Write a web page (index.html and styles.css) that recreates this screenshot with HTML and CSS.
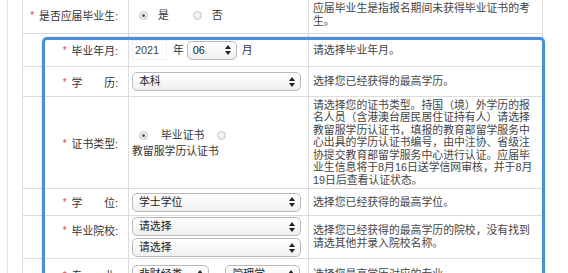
FILE: index.html
```html
<!DOCTYPE html>
<html lang="zh-CN">
<head>
<meta charset="utf-8">
<title>报名信息</title>
<link rel="stylesheet" href="styles.css">
</head>
<body>
<div class="page">
  <div class="frame">
    <table class="form">
      <colgroup>
        <col class="c-label">
        <col class="c-val">
        <col class="c-desc">
      </colgroup>
      <tr class="r1">
        <th><span class="req">*</span>是否应届毕业生:</th>
        <td class="val">
          <span class="radio on first"></span><span class="opt">是</span><span class="radio second"></span><span class="opt">否</span>
        </td>
        <td class="desc">应届毕业生是指报名期间未获得毕业证书的考生。</td>
      </tr>
      <tr class="r2">
        <th><span class="req">*</span>毕业年月:</th>
        <td class="val">
          <div class="ym">
            <span class="year">2021</span><span class="unit u-year">年</span>
            <div class="select s-month"><span>06</span><svg class="arrows" width="6" height="10" viewBox="0 0 6 10"><path d="M0 4 L3 0 L6 4 Z M0 6 L3 10 L6 6 Z"/></svg></div>
            <span class="unit u-month">月</span>
          </div>
        </td>
        <td class="desc">请选择毕业年月。</td>
      </tr>
      <tr class="r3">
        <th><span class="req">*</span>学　　历:</th>
        <td class="val">
          <div class="select"><span>本科</span><svg class="arrows" width="6" height="10" viewBox="0 0 6 10"><path d="M0 4 L3 0 L6 4 Z M0 6 L3 10 L6 6 Z"/></svg></div>
        </td>
        <td class="desc">选择您已经获得的最高学历。</td>
      </tr>
      <tr class="r4">
        <th><span class="req">*</span>证书类型:</th>
        <td class="val cert">
          <span class="radio on first"></span><span class="opt wide">毕业证书</span><span class="radio second-c"></span><span class="opt-block">教留服学历认证书</span>
        </td>
        <td class="desc">请选择您的证书类型。持国（境）外学历的报名人员（含港澳台居民居住证持有人）请选择教留服学历认证书，填报的教育部留学服务中心出具的学历认证书编号，由中注协、省级注协提交教育部留学服务中心进行认证。应届毕业生信息将于8月16日送学信网审核，并于8月19日后查看认证状态。</td>
      </tr>
      <tr class="r5">
        <th><span class="req">*</span>学　　位:</th>
        <td class="val">
          <div class="select"><span>学士学位</span><svg class="arrows" width="6" height="10" viewBox="0 0 6 10"><path d="M0 4 L3 0 L6 4 Z M0 6 L3 10 L6 6 Z"/></svg></div>
        </td>
        <td class="desc">选择您已经获得的最高学位。</td>
      </tr>
      <tr class="r6">
        <th class="top"><span class="req">*</span>毕业院校:</th>
        <td class="val">
          <div class="stack">
            <div class="select"><span>请选择</span><svg class="arrows" width="6" height="10" viewBox="0 0 6 10"><path d="M0 4 L3 0 L6 4 Z M0 6 L3 10 L6 6 Z"/></svg></div>
            <div class="select"><span>请选择</span><svg class="arrows" width="6" height="10" viewBox="0 0 6 10"><path d="M0 4 L3 0 L6 4 Z M0 6 L3 10 L6 6 Z"/></svg></div>
          </div>
        </td>
        <td class="desc">选择您已经获得的最高学历的院校，没有找到请选其他并录入院校名称。</td>
      </tr>
      <tr class="r7">
        <th><span class="req">*</span>专　　业:</th>
        <td class="val">
          <div class="pair">
            <div class="select s-cat"><span>非财经类</span><svg class="arrows" width="6" height="10" viewBox="0 0 6 10"><path d="M0 4 L3 0 L6 4 Z M0 6 L3 10 L6 6 Z"/></svg></div>
            <div class="select s-sub"><span>管理学</span><svg class="arrows" width="6" height="10" viewBox="0 0 6 10"><path d="M0 4 L3 0 L6 4 Z M0 6 L3 10 L6 6 Z"/></svg></div>
          </div>
        </td>
        <td class="desc">选择您最高学历对应的专业。</td>
      </tr>
    </table>
    <div class="focus-ring"></div>
  </div>
</div>
</body>
</html>
```

FILE: styles.css
```css
html, body {
  margin: 0;
  padding: 0;
  background: #fff;
  overflow: hidden;
}

body {
  font-family: "Liberation Sans", "Noto Sans CJK SC", sans-serif;
  font-size: 10.85px;
  color: #333;
}

.page {
  margin: -4px 0 0 7px;
  width: 551px;
  border-left: 1px solid #e4e4e4;
  border-right: 1px solid #e4e4e4;
  padding-left: 14px;
  height: 320px;
}

.frame {
  position: relative;
  width: 520px;
}

.form {
  border-collapse: collapse;
  table-layout: fixed;
  width: 520px;
}

.c-label { width: 106px; }
.c-val { width: 180px; }
.c-desc { width: 234px; }

.form th,
.form td {
  border: 1px solid #dcdcdc;
  vertical-align: middle;
}

.form th {
  text-align: right;
  font-weight: normal;
  padding: 0 10px 0 0;
  color: #333;
  white-space: nowrap;
}

.form th.top {
  vertical-align: top;
  padding-top: 6px;
}

.req {
  color: #e0404a;
  margin-right: 5px;
  font-size: 10px;
  position: relative;
  top: -1px;
}

.val {
  padding: 0 8px 0 3px;
  line-height: 16px;
}

.desc {
  padding: 0 5px 0 4px;
  line-height: 12.55px;
  color: #444;
}

.r1 { height: 37px; }
.r2 { height: 33px; }
.r3 { height: 30px; }
.r4 { height: 92px; }
.r5 { height: 27px; }
.r6 { height: 43px; }
.r7 { height: 32px; }

/* radios */
.radio {
  display: inline-block;
  width: 9px;
  height: 9px;
  box-sizing: border-box;
  border-radius: 50%;
  border: 1px solid #c8c8c8;
  background: radial-gradient(circle at 50% 40%, #fbfbfb 0, #e6e6e6 80%);
  vertical-align: -1px;
  position: relative;
}

.radio.on::after {
  content: "";
  position: absolute;
  left: 2px;
  top: 2px;
  width: 3px;
  height: 3px;
  border-radius: 50%;
  background: #555;
}

.radio.first { margin-left: 7px; }
.radio.second { margin-left: 24px; }
.radio.second-c { margin-left: 13px; margin-right: 20px; }

.opt { margin-left: 10px; }
.opt.wide { margin-left: 13px; }

.opt-block {
  display: inline-block;
}

/* year / month */
.ym {
  display: flex;
  align-items: center;
}

.year {
  box-sizing: border-box;
  width: 35px;
  height: 20px;
  border: 1px solid #f1f1f1;
  padding-left: 2px;
  line-height: 18px;
  color: #444;
}

.unit.u-year { margin: 0 3px 0 6px; }
.unit.u-month { margin-left: 5px; }

/* select look */
.select {
  box-sizing: border-box;
  height: 19px;
  width: 169px;
  border: 1px solid #b9b9b9;
  border-radius: 5px;
  background: linear-gradient(#ffffff, #f0f0f0);
  display: flex;
  align-items: center;
  justify-content: space-between;
  padding: 0 5px 0 6px;
  line-height: 17px;
  color: #222;
  box-shadow: inset 0 1px 0 #fff;
}

.arrows {
  fill: #222;
  flex: none;
}

.s-month {
  width: 50px;
  padding-left: 5px;
}

.stack {
  display: flex;
  flex-direction: column;
  gap: 2px;
}

.pair {
  display: flex;
  gap: 16px;
}

.s-cat { width: 78px; }
.s-sub { width: 75px; }

/* highlighted block */
.focus-ring {
  position: absolute;
  left: 20px;
  top: 41px;
  width: 503px;
  height: 300px;
  box-sizing: border-box;
  border: 3px solid #4a8fd8;
  border-radius: 5px;
  box-shadow: 0 0 2px rgba(74, 143, 216, 0.45);
  pointer-events: none;
}
```
